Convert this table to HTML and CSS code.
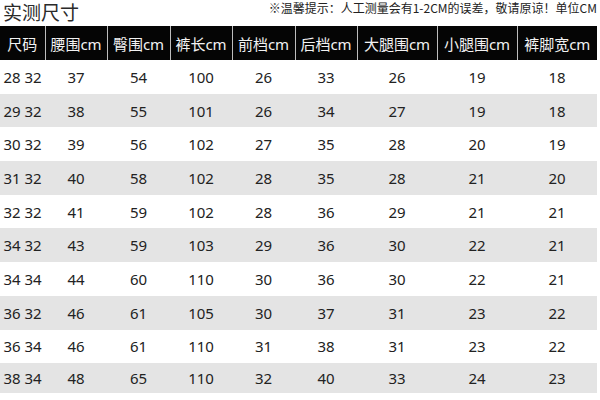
FILE: index.html
```html
<!DOCTYPE html>
<html lang="zh">
<head>
<meta charset="utf-8">
<link rel="stylesheet" href="styles.css">
</head>
<body>
<div class="top">
  <div class="title">实测尺寸</div>
  <div class="note">※温馨提示：人工测量会有1-2CM的误差，敬请原谅！单位CM</div>
</div>
<table class="size">
  <colgroup>
    <col class="c45"><col class="c62"><col class="c63"><col class="c62"><col class="c63"><col class="c62"><col class="c80"><col class="c80"><col class="c80">
  </colgroup>
  <thead>
    <tr><th>尺码</th><th>腰围cm</th><th>臀围cm</th><th>裤长cm</th><th>前档cm</th><th>后档cm</th><th>大腿围cm</th><th>小腿围cm</th><th>裤脚宽cm</th></tr>
  </thead>
  <tbody>
    <tr><td>28 32</td><td>37</td><td>54</td><td>100</td><td>26</td><td>33</td><td>26</td><td>19</td><td>18</td></tr>
    <tr><td>29 32</td><td>38</td><td>55</td><td>101</td><td>26</td><td>34</td><td>27</td><td>19</td><td>18</td></tr>
    <tr><td>30 32</td><td>39</td><td>56</td><td>102</td><td>27</td><td>35</td><td>28</td><td>20</td><td>19</td></tr>
    <tr><td>31 32</td><td>40</td><td>58</td><td>102</td><td>28</td><td>35</td><td>28</td><td>21</td><td>20</td></tr>
    <tr><td>32 32</td><td>41</td><td>59</td><td>102</td><td>28</td><td>36</td><td>29</td><td>21</td><td>21</td></tr>
    <tr><td>34 32</td><td>43</td><td>59</td><td>103</td><td>29</td><td>36</td><td>30</td><td>22</td><td>21</td></tr>
    <tr><td>34 34</td><td>44</td><td>60</td><td>110</td><td>30</td><td>36</td><td>30</td><td>22</td><td>21</td></tr>
    <tr><td>36 32</td><td>46</td><td>61</td><td>105</td><td>30</td><td>37</td><td>31</td><td>23</td><td>22</td></tr>
    <tr><td>36 34</td><td>46</td><td>61</td><td>110</td><td>31</td><td>38</td><td>31</td><td>23</td><td>22</td></tr>
    <tr class="last"><td>38 34</td><td>48</td><td>65</td><td>110</td><td>32</td><td>40</td><td>33</td><td>24</td><td>23</td></tr>
  </tbody>
</table>
</body>
</html>
```
FILE: styles.css
```css
html, body {
  margin: 0;
  padding: 0;
  background: #fff;
  width: 600px;
  height: 400px;
  overflow: hidden;
  font-family: "Noto Sans", "Noto Sans CJK SC", sans-serif;
  color: #222;
}
.top {
  display: flex;
  justify-content: space-between;
  align-items: flex-start;
  height: 26px;
  width: 597px;
}
.title {
  font-family: "Noto Sans CJK SC", sans-serif;
  font-size: 19px;
  line-height: 24px;
  color: #2a2a2a;
  padding-left: 3px;
}
.note {
  font-family: "Noto Sans CJK SC", sans-serif;
  font-size: 12px;
  line-height: 16px;
  color: #222;
}
.size {
  border-collapse: collapse;
  table-layout: fixed;
  width: 597px;
}
.c45 { width: 45px; }
.c62 { width: 62px; }
.c63 { width: 63px; }
.c80 { width: 80px; }
.size th {
  background: #050505;
  color: #f2f2f2;
  font-weight: normal;
  font-size: 15px;
  height: 34px;
  padding: 0;
  text-align: center;
  white-space: nowrap;
  border-left: 1px solid #bdbdbd;
}
.size th:first-child { border-left: none; }
.size td {
  height: 33.7px;
  padding: 0;
  text-align: center;
  font-size: 15px;
  white-space: nowrap;
}
.size tbody tr:nth-child(even) td { background: #e4e4e4; }
.size tr.last td { height: 30px; }
```
